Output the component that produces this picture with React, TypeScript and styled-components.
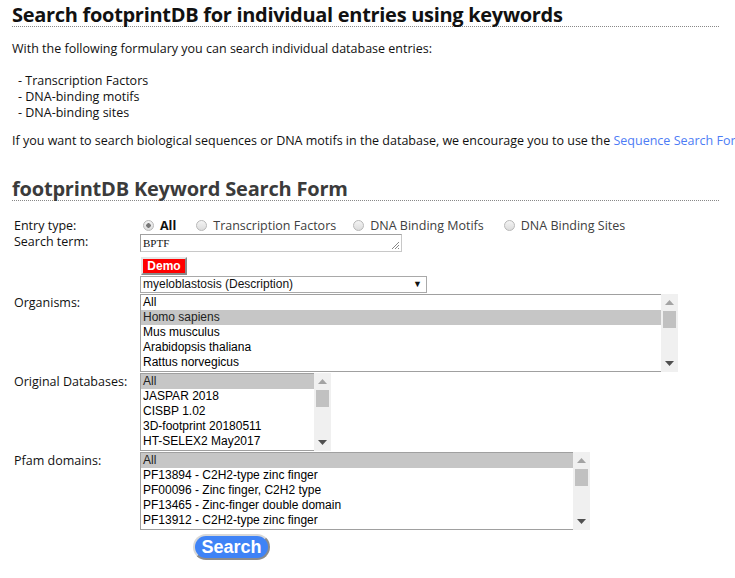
import React from "react";
import styled, { createGlobalStyle } from "styled-components";

const Global = createGlobalStyle`
  html, body { margin: 0; padding: 0; background: #fff; overflow: hidden; }
  body { font-family: "Open Sans", "Noto Sans", sans-serif; color: #111; }
`;

const Page = styled.div`
  padding: 0 2px 0 12px;
  width: 721px;
  box-sizing: border-box;
`;

const H1 = styled.h1`
  margin: 0;
  padding-top: 3px;
  font-size: 20px;
  line-height: 23px;
  font-weight: 700;
  color: #111;
  border-bottom: 1px dotted #888;
  letter-spacing: -0.3px;
`;

const H2 = styled.h2`
  margin: 29px 0 0;
  font-size: 20px;
  line-height: 22px;
  font-weight: 700;
  color: #3b3b3b;
  border-bottom: 1px dotted #888;
  letter-spacing: -0.2px;
`;

const P = styled.p<{ $top: number }>`
  margin: ${(p) => p.$top}px 0 0;
  font-size: 12.5px;
  line-height: 16px;
  white-space: nowrap;
`;

const Items = styled.ul`
  list-style: none;
  margin: 16px 0 0;
  padding: 0 0 0 6px;
  font-size: 12.5px;
  line-height: 16px;
`;

const Link = styled.a`
  color: #4d7cf5;
  text-decoration: none;
`;

const FormGrid = styled.div`
  display: grid;
  grid-template-columns: 128px auto;
  margin-top: 16px;
  align-items: start;
`;

const Label = styled.div<{ $pt?: number }>`
  padding: ${(p) => p.$pt ?? 0}px 0 0 2px;
  font-size: 12.5px;
  line-height: 16px;
  color: #111;
`;

const RadioRow = styled.div`
  display: flex;
  align-items: center;
  height: 16px;
  padding-left: 3px;
  font-size: 12.5px;
`;

const RadioItem = styled.label<{ $gap: number }>`
  display: flex;
  align-items: center;
  gap: 6px;
  margin-right: ${(p) => p.$gap}px;
  color: #404040;
`;

const RadioCircle = styled.span<{ $on?: boolean }>`
  width: 9px;
  height: 9px;
  border-radius: 50%;
  border: 1px solid #b8b8b8;
  background: radial-gradient(circle, ${(p) => (p.$on ? "#777 0 2px, transparent 2.5px" : "transparent 0")}), linear-gradient(#f4f4f4, #dcdcdc);
  box-sizing: content-box;
`;

const Strong = styled.span`
  font-weight: 700;
  color: #111;
`;

const Stack = styled.div`
  display: flex;
  flex-direction: column;
  align-items: flex-start;
`;

const TextArea = styled.div`
  width: 262px;
  height: 18px;
  box-sizing: border-box;
  border: 1px solid #a0a0a0;
  border-bottom-color: #c8c8c8;
  border-right-color: #c8c8c8;
  font-family: "Liberation Serif", serif;
  font-size: 11px;
  line-height: 16px;
  padding-left: 2px;
  position: relative;
`;

const Grip = styled.svg`
  position: absolute;
  right: 1px;
  bottom: 1px;
`;

const DemoButton = styled.button`
  margin: 5px 0 0 1px;
  width: 46px;
  height: 18px;
  background: #ff0000;
  color: #fff;
  font-family: "Liberation Sans", Arial, sans-serif;
  font-weight: 700;
  font-size: 12px;
  line-height: 12px;
  padding: 0;
  border: 2px solid;
  border-color: #e6e6e6 #8a8a8a #8a8a8a #e6e6e6;
`;

const Select = styled.div`
  width: 287px;
  height: 17px;
  box-sizing: border-box;
  border: 1px solid #a9a9a9;
  font-family: "Liberation Sans", Arial, sans-serif;
  font-size: 12px;
  line-height: 15px;
  padding-left: 2px;
  display: flex;
  justify-content: space-between;
  align-items: center;
  margin: 1px 0 1px;
`;

const Arrow = styled.span`
  font-size: 9px;
  margin-right: 4px;
`;

const ListBox = styled.div<{ $w: number }>`
  width: ${(p) => p.$w}px;
  height: 78px;
  box-sizing: border-box;
  border-top: 1px solid #a0a0a0;
  border-bottom: 1px solid #a0a0a0;
  border-left: 1px solid #a0a0a0;
  display: flex;
  margin-bottom: 1px;
  font-family: "Liberation Sans", Arial, sans-serif;
  font-size: 12px;
`;

const Rows = styled.div`
  flex: 1;
  overflow: hidden;
`;

const Row = styled.div<{ $sel?: boolean }>`
  height: 15px;
  line-height: 15px;
  padding-left: 2px;
  white-space: nowrap;
  background: ${(p) => (p.$sel ? "#c6c6c6" : "transparent")};
  color: ${(p) => (p.$sel ? "#222" : "#000")};
`;

const Scroll = styled.div`
  width: 17px;
  background: #f0f0f0;
  margin: -1px 0;
  position: relative;
`;

const Thumb = styled.div`
  position: absolute;
  left: 2px;
  right: 2px;
  top: 17px;
  height: 17px;
  background: #c1c1c1;
`;

const ScrollArrow = styled.svg<{ $down?: boolean }>`
  position: absolute;
  left: 4px;
  ${(p) => (p.$down ? "bottom: 6px;" : "top: 6px;")}
`;

const SearchButton = styled.button`
  margin: 3px 0 0 181px;
  width: 77px;
  height: 26px;
  border-radius: 13px;
  background: #3f83f6;
  color: #fff;
  font-family: "Liberation Sans", Arial, sans-serif;
  font-weight: 700;
  font-size: 18px;
  padding: 0;
  border: 2px solid;
  border-color: #d8d8d8 #8c8c8c #8c8c8c #d8d8d8;
`;

function List({ w, items, sel }: { w: number; items: string[]; sel: number }) {
  return (
    <ListBox $w={w}>
      <Rows>
        {items.map((t, i) => (
          <Row key={t} $sel={i === sel}>
            {t}
          </Row>
        ))}
      </Rows>
      <Scroll>
        <ScrollArrow width="9" height="5" viewBox="0 0 9 5">
          <path d="M0 5 L4.5 0 L9 5 Z" fill="#a3a3a3" />
        </ScrollArrow>
        <Thumb />
        <ScrollArrow $down width="9" height="5" viewBox="0 0 9 5">
          <path d="M0 0 L4.5 5 L9 0 Z" fill="#505050" />
        </ScrollArrow>
      </Scroll>
    </ListBox>
  );
}

export default function App() {
  return (
    <>
      <Global />
      <Page>
        <H1>Search footprintDB for individual entries using keywords</H1>
        <P $top={14}>With the following formulary you can search individual database entries:</P>
        <Items>
          <li>- Transcription Factors</li>
          <li>- DNA-binding motifs</li>
          <li>- DNA-binding sites</li>
        </Items>
        <P $top={12}>
          If you want to search biological sequences or DNA motifs in the database, we encourage you to use the{" "}
          <Link href="#">Sequence Search Form</Link>.
        </P>
        <H2>footprintDB Keyword Search Form</H2>
        <FormGrid>
          <Label $pt={1}>Entry type:</Label>
          <RadioRow>
            <RadioItem $gap={20}>
              <RadioCircle $on />
              <Strong>All</Strong>
            </RadioItem>
            <RadioItem $gap={17}>
              <RadioCircle />
              Transcription Factors
            </RadioItem>
            <RadioItem $gap={20}>
              <RadioCircle />
              DNA Binding Motifs
            </RadioItem>
            <RadioItem $gap={0}>
              <RadioCircle />
              DNA Binding Sites
            </RadioItem>
          </RadioRow>
          <Label>Search term:</Label>
          <Stack>
            <TextArea>
              BPTF
              <Grip width="10" height="10" viewBox="0 0 10 10">
                <path d="M9 2 L2 9 M9 5 L5 9 M9 8 L8 9" stroke="#888" strokeWidth="1" />
              </Grip>
            </TextArea>
            <DemoButton>Demo</DemoButton>
            <Select>
              myeloblastosis (Description)
              <Arrow>▼</Arrow>
            </Select>
          </Stack>
          <Label $pt={1}>Organisms:</Label>
          <List w={538} sel={1} items={["All", "Homo sapiens", "Mus musculus", "Arabidopsis thaliana", "Rattus norvegicus"]} />
          <Label $pt={1}>Original Databases:</Label>
          <List w={191} sel={0} items={["All", "JASPAR 2018", "CISBP 1.02", "3D-footprint 20180511", "HT-SELEX2 May2017"]} />
          <Label $pt={1}>Pfam domains:</Label>
          <List
            w={450}
            sel={0}
            items={[
              "All",
              "PF13894 - C2H2-type zinc finger",
              "PF00096 - Zinc finger, C2H2 type",
              "PF13465 - Zinc-finger double domain",
              "PF13912 - C2H2-type zinc finger",
            ]}
          />
        </FormGrid>
        <SearchButton>Search</SearchButton>
      </Page>
    </>
  );
}
